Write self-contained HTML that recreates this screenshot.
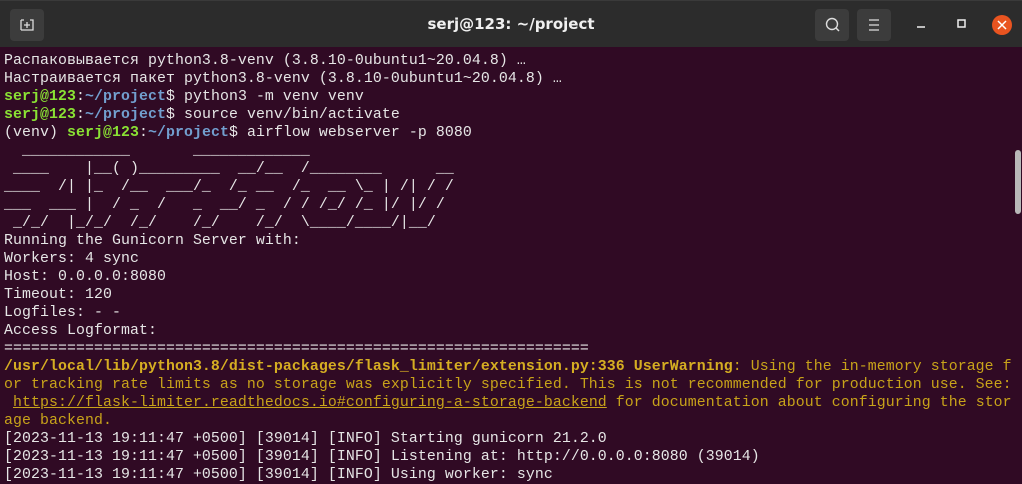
<!DOCTYPE html>
<html><head><meta charset="utf-8"><style>
html,body{margin:0;padding:0;}
body{width:1022px;height:484px;overflow:hidden;background:#300a24;position:relative;font-family:"Liberation Mono","DejaVu Sans Mono",monospace;}
#tb{position:absolute;left:0;top:0;width:1022px;height:47px;background:#2c2c2c;border-top:1px solid #3a3a3a;box-sizing:border-box;}
#title{position:absolute;left:0;right:0;top:14px;text-align:center;color:#f0f0f0;font:bold 15px "DejaVu Sans","Liberation Sans",sans-serif;}
.btn{position:absolute;top:8px;width:34px;height:32px;background:#3c3c3c;border-radius:4px;}
#term{position:absolute;left:4px;top:52px;color:#e6e6e6;font-size:14.87px;letter-spacing:0.08px;line-height:18px;white-space:pre;}
.g{color:#8ae234;font-weight:bold}.b{color:#729fcf;font-weight:bold}
.y{color:#c8a31a}.yb{color:#d6ae22;font-weight:bold}.u{text-decoration:underline}
#sb{position:absolute;left:1015px;top:150px;width:6px;height:64px;background:#b8b8b8;border-radius:3px;}
</style></head><body>
<div id="tb">
<div class="btn" style="left:10px"><svg width="34" height="32"><path d="M11 11v10M11 11h3M11 21h12V11h-3M17 13v6M14 16h6" stroke="#ddd" stroke-width="1.3" fill="none"/></svg></div>
<div id="title">serj@123: ~/project</div>
<div class="btn" style="left:815px"><svg width="34" height="32"><circle cx="17" cy="15" r="5.5" stroke="#ddd" stroke-width="1.4" fill="none"/><path d="M21 19l3 3" stroke="#ddd" stroke-width="1.5"/></svg></div>
<div class="btn" style="left:857px"><svg width="34" height="32"><path d="M12 11h10M12 16h10M12 21h10" stroke="#ddd" stroke-width="1.3"/></svg></div>
<svg style="position:absolute;left:915px;top:14px" width="100" height="22"><path d="M2 12h8" stroke="#eee" stroke-width="1.5"/><rect x="43" y="5" width="7" height="7" stroke="#eee" stroke-width="1.5" fill="none"/><circle cx="87" cy="10" r="10" fill="#e95420"/><path d="M83 6l8 8M91 6l-8 8" stroke="#fff" stroke-width="1.5"/></svg>
</div>
<div id="term">Распаковывается python3.8-venv (3.8.10-0ubuntu1~20.04.8) …
Настраивается пакет python3.8-venv (3.8.10-0ubuntu1~20.04.8) …
<span class="g">serj@123</span>:<span class="b">~/project</span>$ python3 -m venv venv
<span class="g">serj@123</span>:<span class="b">~/project</span>$ source venv/bin/activate
(venv) <span class="g">serj@123</span>:<span class="b">~/project</span>$ airflow webserver -p 8080
  ____________       _____________
 ____    |__( )_________  __/__  /________      __
____  /| |_  /__  ___/_  /_ __  /_  __ \_ | /| / /
___  ___ |  / _  /   _  __/ _  / / /_/ /_ |/ |/ /
 _/_/  |_/_/  /_/    /_/    /_/  \____/____/|__/
Running the Gunicorn Server with:
Workers: 4 sync
Host: 0.0.0.0:8080
Timeout: 120
Logfiles: - -
Access Logformat:
=================================================================
<span class="yb">/usr/local/lib/python3.8/dist-packages/flask_limiter/extension.py:336 UserWarning</span><span class="y">: Using the in-memory storage f
or tracking rate limits as no storage was explicitly specified. This is not recommended for production use. See:
 <span class="u">https://flask-limiter.readthedocs.io#configuring-a-storage-backend</span> for documentation about configuring the stor
age backend.</span>
[2023-11-13 19:11:47 +0500] [39014] [INFO] Starting gunicorn 21.2.0
[2023-11-13 19:11:47 +0500] [39014] [INFO] Listening at: http://0.0.0.0:8080 (39014)
[2023-11-13 19:11:47 +0500] [39014] [INFO] Using worker: sync</div>
<div id="sb"></div>
</body></html>
